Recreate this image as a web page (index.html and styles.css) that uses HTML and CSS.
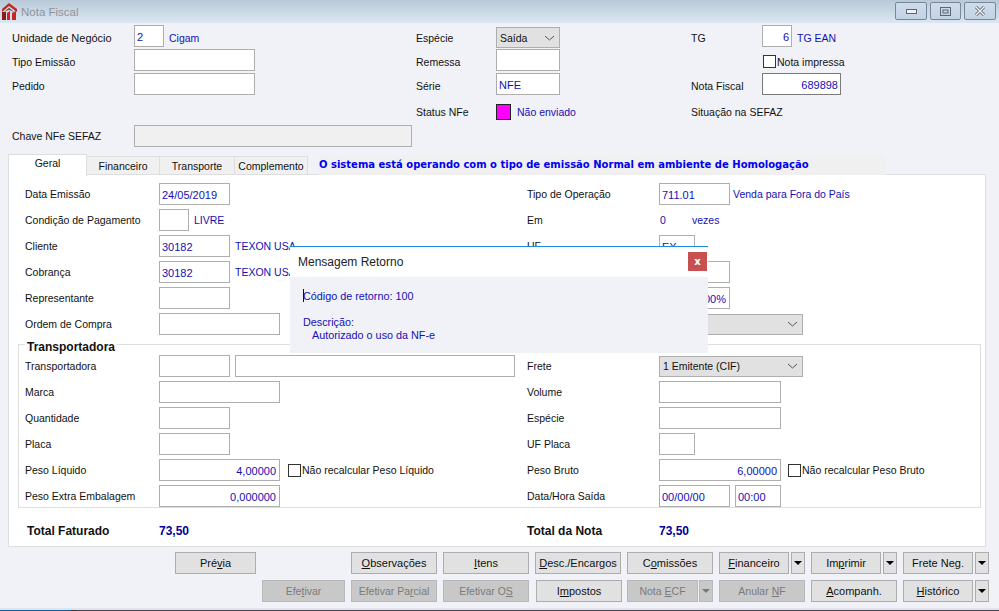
FILE: index.html
```html
<!DOCTYPE html>
<html lang="pt">
<head>
<meta charset="utf-8">
<title>Nota Fiscal</title>
<link rel="stylesheet" href="styles.css">
</head>
<body>
<div class="window">
  <header class="titlebar">
    <svg class="logo" width="15" height="17" viewBox="0 0 15 17">
      <path d="M0 6 L7 0 L15 6 L15 9 L7 3 L0 9Z" fill="#c4261d"/>
      <path d="M2 9 L7 5 L12 9 L7 6.500Z" fill="#7c1712"/>
      <rect x="0" y="9" width="4" height="8" fill="#8e1a15"/>
      <path d="M5 10 L8 8 L8 17 L5 17Z M10 10 L14 8 L14 17 L10 17Z" fill="#c8261e"/>
    </svg>
    <span class="title">Nota Fiscal</span>
    <div class="winbtns">
      <div class="winbtn w-min"><svg width="11" height="5" viewBox="0 0 11 5"><rect x=".5" y=".5" width="10" height="4" fill="#eef2f6" stroke="#5d6570"/></svg></div>
      <div class="winbtn w-max"><svg width="11" height="9" viewBox="0 0 11 9"><rect x=".5" y=".5" width="10" height="8" fill="none" stroke="#5d6570"/><rect x="3" y="3" width="5" height="3" fill="none" stroke="#5d6570"/></svg></div>
      <div class="winbtn w-close"><svg width="12" height="10" viewBox="0 0 12 10"><path d="M2 1 L10 9 M10 1 L2 9" stroke="#5d6570" stroke-width="3"/><path d="M2 1 L10 9 M10 1 L2 9" stroke="#f2f5f8" stroke-width="1.400"/></svg></div>
    </div>
  </header>

  <section class="top">
    <div class="row lo">
      <div class="cell t1"><label class="l-t1 wide">Unidade de Negócio</label><input class="inp w30 val" value="2" readonly><span class="val after">Cigam</span></div>
      <div class="cell t2"><label class="l-t2">Espécie</label><div class="sel w64"><span>Saída</span><svg width="11" height="6" viewBox="0 0 11 6"><path d="M1 1 L5.500 5 L10 1" fill="none" stroke="#555"/></svg></div></div>
      <div class="cell"><label class="l-t3">TG</label><input class="inp w30 val right" value="6" readonly><span class="val after-s">TG EAN</span></div>
    </div>
    <div class="row lo">
      <div class="cell t1"><label class="l-t1">Tipo Emissão</label><input class="inp w121" readonly></div>
      <div class="cell t2"><label class="l-t2">Remessa</label><input class="inp w64" readonly></div>
      <div class="cell"><span class="l-t3"></span><span class="check ml1"></span><span class="check-l">Nota impressa</span></div>
    </div>
    <div class="row lo">
      <div class="cell t1"><label class="l-t1">Pedido</label><input class="inp w121" readonly></div>
      <div class="cell t2"><label class="l-t2">Série</label><input class="inp w64 val" value="NFE" readonly></div>
      <div class="cell"><label class="l-t3">Nota Fiscal</label><input class="inp w79 val right dark" value="689898" readonly></div>
    </div>
    <div class="row status">
      <div class="cell t1"></div>
      <div class="cell t2"><label class="l-t2">Status NFe</label><span class="swatch"></span><span class="val after-st">Não enviado</span></div>
      <div class="cell"><label>Situação na SEFAZ</label></div>
    </div>
    <div class="row chave">
      <div class="cell"><label class="l-t1">Chave NFe SEFAZ</label><input class="inp w278 off" readonly></div>
    </div>
  </section>

  <nav class="tabs">
    <div class="tab active t-geral">Geral</div>
    <div class="tab t-fin">Financeiro</div>
    <div class="tab t-tra">Transporte</div>
    <div class="tab t-com">Complemento</div>
    <div class="notice">O sistema está operando com o tipo de emissão Normal em ambiente de Homologação</div>
  </nav>

  <main class="panel">
    <div class="row">
      <div class="cell half"><label class="l-a">Data Emissão</label><input class="inp w71 val" value="24/05/2019" readonly></div>
      <div class="cell"><label class="l-b">Tipo de Operação</label><input class="inp w71 val" value="711.01" readonly><span class="val after-n">Venda para Fora do País</span></div>
    </div>
    <div class="row">
      <div class="cell half"><label class="l-a">Condição de Pagamento</label><input class="inp w30 val" readonly><span class="val after-s">LIVRE</span></div>
      <div class="cell"><label class="l-b">Em</label><span class="val w33">0</span><span class="val">vezes</span></div>
    </div>
    <div class="row">
      <div class="cell half"><label class="l-a">Cliente</label><input class="inp w71 val" value="30182" readonly><span class="val after-s">TEXON USA</span></div>
      <div class="cell"><label class="l-b">UF</label><input class="inp w36 val" value="EX" readonly></div>
    </div>
    <div class="row">
      <div class="cell half"><label class="l-a">Cobrança</label><input class="inp w71 val" value="30182" readonly><span class="val after-s">TEXON USA</span></div>
      <div class="cell"><span class="l-b"></span><input class="inp w71" readonly></div>
    </div>
    <div class="row">
      <div class="cell half"><label class="l-a">Representante</label><input class="inp w71" readonly></div>
      <div class="cell"><span class="l-b"></span><input class="inp w71 val right" value="0,00%" readonly></div>
    </div>
    <div class="row">
      <div class="cell half"><label class="l-a">Ordem de Compra</label><input class="inp w121" readonly></div>
      <div class="cell"><span class="l-b"></span><div class="sel w144"><span></span><svg width="11" height="6" viewBox="0 0 11 6"><path d="M1 1 L5.500 5 L10 1" fill="none" stroke="#555"/></svg></div></div>
    </div>

    <fieldset class="group">
      <legend>Transportadora</legend>
      <div class="row">
        <div class="cell half"><label class="l-a">Transportadora</label><input class="inp w71" readonly><input class="inp w280 ml5" readonly></div>
        <div class="cell"><label class="l-b">Frete</label><div class="sel w144"><span>1 Emitente (CIF)</span><svg width="11" height="6" viewBox="0 0 11 6"><path d="M1 1 L5.500 5 L10 1" fill="none" stroke="#555"/></svg></div></div>
      </div>
      <div class="row">
        <div class="cell half"><label class="l-a">Marca</label><input class="inp w121" readonly></div>
        <div class="cell"><label class="l-b">Volume</label><input class="inp w122" readonly></div>
      </div>
      <div class="row">
        <div class="cell half"><label class="l-a">Quantidade</label><input class="inp w71" readonly></div>
        <div class="cell"><label class="l-b">Espécie</label><input class="inp w122" readonly></div>
      </div>
      <div class="row">
        <div class="cell half"><label class="l-a">Placa</label><input class="inp w71" readonly></div>
        <div class="cell"><label class="l-b">UF Placa</label><input class="inp w36" readonly></div>
      </div>
      <div class="row">
        <div class="cell half"><label class="l-a">Peso Líquido</label><input class="inp w121 val right" value="4,00000" readonly><span class="check ml8"></span><span class="check-l">Não recalcular Peso Líquido</span></div>
        <div class="cell"><label class="l-b">Peso Bruto</label><input class="inp w122 val right" value="6,00000" readonly><span class="check ml7"></span><span class="check-l">Não recalcular Peso Bruto</span></div>
      </div>
      <div class="row">
        <div class="cell half"><label class="l-a">Peso Extra Embalagem</label><input class="inp w121 val right" value="0,000000" readonly></div>
        <div class="cell"><label class="l-b">Data/Hora Saída</label><input class="inp w71 val" value="00/00/00" readonly><input class="inp w46 val ml5" value="00:00" readonly></div>
      </div>
    </fieldset>

    <div class="totals">
      <div class="cell half"><b class="l-total">Total Faturado</b><b class="sum">73,50</b></div>
      <div class="cell"><b class="l-total-b">Total da Nota</b><b class="sum">73,50</b></div>
    </div>
  </main>

  <footer class="actions">
    <div class="btnrow">
      <button class="btn w81">Pré<u>v</u>ia</button>
      <button class="btn w86 push"><u>O</u>bservações</button>
      <button class="btn w86"><u>I</u>tens</button>
      <button class="btn w86"><u>D</u>esc./Encargos</button>
      <button class="btn w86">C<u>o</u>missões</button>
      <div class="split"><button class="btn w70"><u>F</u>inanceiro</button><button class="btn arrow"><i></i></button></div>
      <div class="split"><button class="btn w70">Im<u>p</u>rimir</button><button class="btn arrow"><i></i></button></div>
      <div class="split"><button class="btn w70">Frete Ne<u>g</u>.</button><button class="btn arrow"><i></i></button></div>
    </div>
    <div class="btnrow">
      <button class="btn w83 off push">Efe<u>t</u>ivar</button>
      <button class="btn w86 off">Efetivar Pa<u>r</u>cial</button>
      <button class="btn w86 off">Efetivar O<u>S</u></button>
      <button class="btn w86 nudge">I<u>m</u>postos</button>
      <div class="split tight"><button class="btn w71 off">Nota <u>E</u>CF</button><button class="btn arrow off"><i></i></button></div>
      <button class="btn w86 off">Anular <u>N</u>F</button>
      <button class="btn w86"><u>A</u>companh.</button>
      <div class="split"><button class="btn w70"><u>H</u>istórico</button><button class="btn arrow"><i></i></button></div>
    </div>
  </footer>

  <div class="dialog">
    <div class="dlg-head"><span>Mensagem Retorno</span><button class="dlg-x">x</button></div>
    <div class="dlg-body">
      <span class="caret"></span>
      <p>Código de retorno: 100</p>
      <p class="gap">Descrição:</p>
      <p class="ind">Autorizado o uso da NF-e</p>
    </div>
  </div>
</div>
<div class="taskstrip"><span class="task-a"></span><span class="task-b"></span></div>
</body>
</html>
```
FILE: styles.css
```css
* { box-sizing: border-box; }
html, body { margin: 0; padding: 0; height: 611px; overflow: hidden; }
body {
  font-family: "Liberation Sans", "DejaVu Sans", sans-serif;
  font-size: 10.500px;
  color: #111;
  background: #f1f2f8;
  display: flex;
  flex-direction: column;
}
.window { position: relative; flex: 1; border-bottom: 2px solid #dfe4ee; }
label { white-space: nowrap; }

.titlebar {
  height: 23px;
  display: flex;
  align-items: center;
  padding-left: 2px;
  background: linear-gradient(#b9c9d8, #dbe7f2);
}
.logo { flex: none; }
.title { margin-left: 4px; font-size: 11.500px; color: #8e949b; }
.winbtns { margin-left: auto; display: flex; gap: 3px; padding-right: 3px; align-self: flex-start; padding-top: 2px; }
.winbtn {
  height: 18px;
  border: 1px solid #76879a;
  border-radius: 2px;
  display: flex;
  align-items: center;
  justify-content: center;
  background: linear-gradient(#cfdcea, #c3d3e4);
}
.w-min { width: 32px; }
.w-max { width: 31px; }
.w-close { width: 32px; }

.row { display: flex; height: 22px; margin-bottom: 4px; }
.cell { display: flex; align-items: center; }

.top { padding: 2px 0 0 12px; }
.top .row { margin-bottom: 2px; }
.t1 { width: 404px; }
.t2 { width: 275px; }
.l-t1 { width: 122px; flex: none; }
.l-t1.wide { font-size: 11px; }
.l-t2 { width: 80px; flex: none; }
.l-t3 { width: 71px; flex: none; }
.status { margin-top: 6px; height: 22px; }
.chave { margin-top: 0; }
.lo label, .lo .after, .lo .after-s, .lo .check-l { padding-top: 4px; }
.lo .check { margin-top: 2px; }
.lo .sel { margin-top: 2px; padding-top: 2px; }

.inp {
  height: 22px;
  padding: 2px 2px 0 2px;
  border: 1px solid #aeaeae;
  background: #fff;
  font: inherit;
  font-size: 11px;
  outline: none;
  flex: none;
  border-radius: 0;
}
.panel .inp { padding: 1px 3px 0 2px; }
.inp.off { background: #f0f0f0; }
.inp.dark { border-color: #7a7a7a; }
.val { color: #1410b4; }
.right { text-align: right; }
.w30 { width: 30px; }
.w36 { width: 36px; }
.w46 { width: 46px; }
.w64 { width: 64px; }
.w71 { width: 71px; }
.w79 { width: 79px; }
.w121 { width: 121px; }
.w122 { width: 122px; }
.w144 { width: 144px; }
.w278 { width: 278px; }
.w280 { width: 280px; }
.w33 { width: 33px; padding-left: 1px; }
.ml1 { margin-left: 1px; }
.ml5 { margin-left: 5px; }
.ml7 { margin-left: 7px; }
.ml8 { margin-left: 8px; }
.after { margin-left: 5px; }
.after-s { margin-left: 5px; white-space: nowrap; }
.after-n { margin-left: 3px; white-space: nowrap; }
.after-st { margin-left: 6px; }

.sel {
  height: 21px;
  flex: none;
  display: flex;
  align-items: center;
  justify-content: space-between;
  padding: 0 4px 0 3px;
  border: 1px solid #aeaeae;
  background: #e1e1e1;
}
.check {
  width: 13px;
  height: 13px;
  flex: none;
  border: 1px solid #333;
  background: #fff;
}
.check-l { margin-left: 1px; white-space: nowrap; }
.swatch { width: 15px; height: 16px; flex: none; background: #ff00ff; border: 1px solid #222; }

.tabs { display: flex; height: 21px; margin-top: 7px; padding-left: 8px; align-items: flex-end; position: relative; z-index: 1; }
.tab {
  height: 19px;
  text-align: center;
  background: #f0f0f0;
  border: 1px solid #dedede;
  border-left: 0;
  white-space: nowrap;
  padding-top: 3px;
}
.tab.active {
  height: 22px;
  margin-bottom: -1px;
  background: #fff;
  border-left: 1px solid #dedede;
  border-bottom: 0;
  padding-top: 2px;
}
.t-geral { width: 79px; }
.t-fin { width: 73px; }
.t-tra { width: 75px; }
.t-com { width: 73px; }
.notice {
  margin-left: 11px;
  width: 567px;
  height: 20px;
  background: #f0f0f0;
  color: #0000f0;
  font-family: "DejaVu Sans", sans-serif;
  font-weight: 700;
  font-size: 10px;
  line-height: 20px;
  white-space: nowrap;
}

.panel {
  margin: 0 13px 0 8px;
  height: 373px;
  padding: 8px 0 0 16px;
  background: #fff;
  border: 1px solid #dedede;
  margin-top: -1px;
}
.half { width: 502px; }
.l-a { width: 134px; flex: none; }
.l-b { width: 132px; flex: none; }

.group {
  margin: 4px 4px 0 -7px;
  padding: 6px 0 2px 6px;
  border: 1px solid #dedede;
  height: 169px;
  min-width: 0;
}
.group legend {
  padding: 0 2px;
  margin-left: 0;
  font-weight: 700;
  font-size: 12px;
  line-height: 17px;
  height: 10px;
  color: #111;
}
.totals { display: flex; margin-top: 13px; height: 20px; font-size: 12px; }
.totals b { font-weight: 700; }
.l-total { width: 132px; margin-left: 2px; }
.l-total-b { width: 132px; }
.sum { color: #00009a; }

.actions { padding-top: 5px; }
.btnrow { display: flex; gap: 6px; height: 22px; margin-bottom: 6px; padding: 0 10px 0 0; justify-content: flex-end; }
.btn {
  height: 22px;
  padding: 0;
  border: 1px solid #adadad;
  background: #e1e1e1;
  color: #111;
  font: inherit;
  font-size: 11px;
  white-space: nowrap;
  flex: none;
}
.btn.off { background: #c8c8c8; color: #7a7a7a; border-color: #b8b8b8; font-size: 10.500px; }
.w70 { width: 70px; }
.w81 { width: 81px; }
.w83 { width: 83px; }
.w86 { width: 86px; }
.w71.btn { width: 71px; }
.push { margin-left: 0; }
.btnrow:first-child .w81 { margin-right: 89px; }
.nudge { margin-left: 1px; margin-right: -1px; }
.split { display: flex; gap: 2px; flex: none; }
.split.tight { gap: 1px; }
.arrow { width: 14px; display: flex; align-items: center; justify-content: center; }
.arrow i { display: block; width: 0; height: 0; border: 4.500px solid transparent; border-top: 4px solid #000; border-bottom: 0; }
.arrow.off i { border-top-color: #777; }

.dialog {
  position: absolute;
  left: 290px;
  top: 246px;
  width: 418px;
  height: 107px;
  border-top: 1px solid #1e88e5;
  background: #f1f2f8;
  color: #1410b4;
  font-size: 10.800px;
}
.dlg-head {
  height: 30px;
  background: #fff;
  display: flex;
  align-items: center;
  justify-content: space-between;
  padding: 0 1px 0 8px;
  font-size: 12px;
  color: #222;
}
.dlg-x {
  width: 19px;
  height: 19px;
  margin-top: -2px;
  padding: 0;
  border: 0;
  background: #c75050;
  color: #fff;
  font: 700 10px "DejaVu Sans", sans-serif;
}
.dlg-body { position: relative; padding: 13px 0 0 13px; line-height: 13px; }
.dlg-body p { margin: 0; white-space: nowrap; }
.dlg-body .gap { margin-top: 13px; }
.dlg-body .ind { padding-left: 9px; }
.caret { position: absolute; left: 13px; top: 12px; width: 1px; height: 13px; background: #111; }

.taskstrip { height: 2px; display: flex; background: #444; flex: none; }
.task-a { width: 71px; background: #0a5ea8; }
.task-b { width: 6px; background: #333; }
```
